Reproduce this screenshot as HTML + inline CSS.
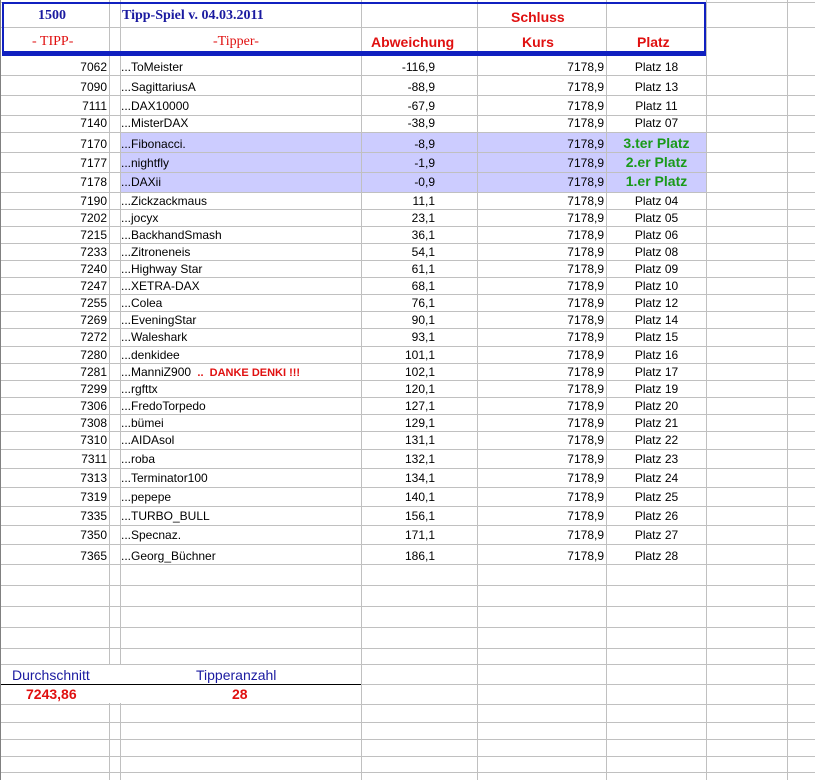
<!DOCTYPE html>
<html><head><meta charset="utf-8"><style>
body{margin:0;width:815px;height:780px;background:#fff;position:relative;overflow:hidden;font-family:"Liberation Sans",Arial,sans-serif;font-size:12px;color:#000}
.h{position:absolute;left:0;width:815px;height:1px;background:#c0c0c0}
.v{position:absolute;top:0;height:780px;width:1px;background:#c0c0c0}
.t{position:absolute;white-space:nowrap;line-height:14px}
.r{text-align:right}
.c{text-align:center}
.hl{position:absolute;left:121px;width:585px;background:#ccccff}
.g{color:#1a9a1a;font-weight:bold;font-size:14px}
.red{color:#e01010}
</style></head><body>
<div class="hl" style="top:133px;height:59px"></div>
<!-- horizontal lines -->
<div class="h" style="top:2px"></div><div class="h" style="top:27px"></div>
<div class="h" style="top:75px"></div><div class="h" style="top:95px"></div><div class="h" style="top:115px"></div><div class="h" style="top:132px"></div><div class="h" style="top:152px"></div><div class="h" style="top:172px"></div><div class="h" style="top:192px"></div>
<div class="h" style="top:209px"></div><div class="h" style="top:226px"></div><div class="h" style="top:243px"></div><div class="h" style="top:260px"></div><div class="h" style="top:277px"></div><div class="h" style="top:294px"></div><div class="h" style="top:311px"></div><div class="h" style="top:328px"></div><div class="h" style="top:346px"></div><div class="h" style="top:363px"></div><div class="h" style="top:380px"></div><div class="h" style="top:397px"></div><div class="h" style="top:414px"></div><div class="h" style="top:431px"></div><div class="h" style="top:449px"></div><div class="h" style="top:468px"></div><div class="h" style="top:487px"></div><div class="h" style="top:506px"></div><div class="h" style="top:525px"></div><div class="h" style="top:544px"></div><div class="h" style="top:564px"></div><div class="h" style="top:585px"></div><div class="h" style="top:606px"></div><div class="h" style="top:627px"></div><div class="h" style="top:648px"></div><div class="h" style="top:664px"></div><div class="h" style="top:684px"></div><div class="h" style="top:704px"></div><div class="h" style="top:722px"></div><div class="h" style="top:739px"></div><div class="h" style="top:756px"></div><div class="h" style="top:772px"></div>
<!-- vertical lines -->
<div class="v" style="left:0;background:#808080"></div>
<div class="v" style="left:109px"></div><div class="v" style="left:120px"></div><div class="v" style="left:361px"></div><div class="v" style="left:477px"></div><div class="v" style="left:606px"></div><div class="v" style="left:706px"></div><div class="v" style="left:787px"></div>
<!-- header box -->
<div style="position:absolute;left:2px;top:2px;width:700px;height:49px;border:2px solid #1020c0;border-bottom-width:3px;background:transparent"></div>
<div style="position:absolute;left:4px;top:4px;width:105px;height:48px;background:#fff"></div>
<div style="position:absolute;left:121px;top:4px;width:240px;height:48px;background:#fff"></div>
<div style="position:absolute;left:362px;top:4px;width:115px;height:48px;background:#fff"></div>
<div style="position:absolute;left:478px;top:4px;width:128px;height:48px;background:#fff"></div>
<div style="position:absolute;left:607px;top:4px;width:97px;height:48px;background:#fff"></div>
<div class="h" style="top:27px;left:4px;width:700px"></div>
<div class="t" style="left:38px;top:9px;font-family:'Liberation Serif',serif;font-weight:bold;font-size:14px;color:#1a1aa0">1500</div>
<div class="t" style="left:122px;top:9px;font-family:'Liberation Serif',serif;font-weight:bold;font-size:14px;color:#1a1aa0">Tipp-Spiel v. 04.03.2011</div>
<div class="t red" style="left:32px;top:35px;font-family:'Liberation Serif',serif;font-size:14px">- TIPP-</div>
<div class="t red" style="left:213px;top:35px;font-family:'Liberation Serif',serif;font-size:14px">-Tipper-</div>
<div class="t red" style="left:371px;top:35px;font-weight:bold;font-size:14px">Abweichung</div>
<div class="t red" style="left:511px;top:10px;font-weight:bold;font-size:14px">Schluss</div>
<div class="t red" style="left:522px;top:35px;font-weight:bold;font-size:14px">Kurs</div>
<div class="t red" style="left:637px;top:35px;font-weight:bold;font-size:14px">Platz</div>
<div style="position:absolute;left:2px;top:51px;width:704px;height:3px;background:#1020c0"></div>

<!-- rows -->
<div id="rows"></div>
<div class="t r" style="left:40px;width:67px;top:60px">7062</div><div class="t" style="left:121px;top:60px">...ToMeister</div><div class="t r" style="left:380px;width:55px;top:60px">-116,9</div><div class="t r" style="left:540px;width:64px;top:60px">7178,9</div><div class="t c" style="left:607px;width:99px;top:60px">Platz 18</div>
<div class="t r" style="left:40px;width:67px;top:80px">7090</div><div class="t" style="left:121px;top:80px">...SagittariusA</div><div class="t r" style="left:380px;width:55px;top:80px">-88,9</div><div class="t r" style="left:540px;width:64px;top:80px">7178,9</div><div class="t c" style="left:607px;width:99px;top:80px">Platz 13</div>
<div class="t r" style="left:40px;width:67px;top:99px">7111</div><div class="t" style="left:121px;top:99px">...DAX10000</div><div class="t r" style="left:380px;width:55px;top:99px">-67,9</div><div class="t r" style="left:540px;width:64px;top:99px">7178,9</div><div class="t c" style="left:607px;width:99px;top:99px">Platz 11</div>
<div class="t r" style="left:40px;width:67px;top:116px">7140</div><div class="t" style="left:121px;top:116px">...MisterDAX</div><div class="t r" style="left:380px;width:55px;top:116px">-38,9</div><div class="t r" style="left:540px;width:64px;top:116px">7178,9</div><div class="t c" style="left:607px;width:99px;top:116px">Platz 07</div>
<div class="t r" style="left:40px;width:67px;top:137px">7170</div><div class="t" style="left:121px;top:137px">...Fibonacci.</div><div class="t r" style="left:380px;width:55px;top:137px">-8,9</div><div class="t r" style="left:540px;width:64px;top:137px">7178,9</div><div class="t c g" style="left:607px;width:99px;top:136px">3.ter Platz</div>
<div class="t r" style="left:40px;width:67px;top:156px">7177</div><div class="t" style="left:121px;top:156px">...nightfly</div><div class="t r" style="left:380px;width:55px;top:156px">-1,9</div><div class="t r" style="left:540px;width:64px;top:156px">7178,9</div><div class="t c g" style="left:607px;width:99px;top:155px">2.er Platz</div>
<div class="t r" style="left:40px;width:67px;top:175px">7178</div><div class="t" style="left:121px;top:175px">...DAXii</div><div class="t r" style="left:380px;width:55px;top:175px">-0,9</div><div class="t r" style="left:540px;width:64px;top:175px">7178,9</div><div class="t c g" style="left:607px;width:99px;top:174px">1.er Platz</div>

<div class="t r" style="left:40px;width:67px;top:194px">7190</div><div class="t" style="left:121px;top:194px">...Zickzackmaus</div><div class="t r" style="left:380px;width:55px;top:194px">11,1</div><div class="t r" style="left:540px;width:64px;top:194px">7178,9</div><div class="t c" style="left:607px;width:99px;top:194px">Platz 04</div>
<div class="t r" style="left:40px;width:67px;top:211px">7202</div><div class="t" style="left:121px;top:211px">...jocyx</div><div class="t r" style="left:380px;width:55px;top:211px">23,1</div><div class="t r" style="left:540px;width:64px;top:211px">7178,9</div><div class="t c" style="left:607px;width:99px;top:211px">Platz 05</div>
<div class="t r" style="left:40px;width:67px;top:228px">7215</div><div class="t" style="left:121px;top:228px">...BackhandSmash</div><div class="t r" style="left:380px;width:55px;top:228px">36,1</div><div class="t r" style="left:540px;width:64px;top:228px">7178,9</div><div class="t c" style="left:607px;width:99px;top:228px">Platz 06</div>
<div class="t r" style="left:40px;width:67px;top:245px">7233</div><div class="t" style="left:121px;top:245px">...Zitroneneis</div><div class="t r" style="left:380px;width:55px;top:245px">54,1</div><div class="t r" style="left:540px;width:64px;top:245px">7178,9</div><div class="t c" style="left:607px;width:99px;top:245px">Platz 08</div>
<div class="t r" style="left:40px;width:67px;top:262px">7240</div><div class="t" style="left:121px;top:262px">...Highway Star</div><div class="t r" style="left:380px;width:55px;top:262px">61,1</div><div class="t r" style="left:540px;width:64px;top:262px">7178,9</div><div class="t c" style="left:607px;width:99px;top:262px">Platz 09</div>
<div class="t r" style="left:40px;width:67px;top:279px">7247</div><div class="t" style="left:121px;top:279px">...XETRA-DAX</div><div class="t r" style="left:380px;width:55px;top:279px">68,1</div><div class="t r" style="left:540px;width:64px;top:279px">7178,9</div><div class="t c" style="left:607px;width:99px;top:279px">Platz 10</div>
<div class="t r" style="left:40px;width:67px;top:296px">7255</div><div class="t" style="left:121px;top:296px">...Colea</div><div class="t r" style="left:380px;width:55px;top:296px">76,1</div><div class="t r" style="left:540px;width:64px;top:296px">7178,9</div><div class="t c" style="left:607px;width:99px;top:296px">Platz 12</div>
<div class="t r" style="left:40px;width:67px;top:313px">7269</div><div class="t" style="left:121px;top:313px">...EveningStar</div><div class="t r" style="left:380px;width:55px;top:313px">90,1</div><div class="t r" style="left:540px;width:64px;top:313px">7178,9</div><div class="t c" style="left:607px;width:99px;top:313px">Platz 14</div>
<div class="t r" style="left:40px;width:67px;top:330px">7272</div><div class="t" style="left:121px;top:330px">...Waleshark</div><div class="t r" style="left:380px;width:55px;top:330px">93,1</div><div class="t r" style="left:540px;width:64px;top:330px">7178,9</div><div class="t c" style="left:607px;width:99px;top:330px">Platz 15</div>
<div class="t r" style="left:40px;width:67px;top:348px">7280</div><div class="t" style="left:121px;top:348px">...denkidee</div><div class="t r" style="left:380px;width:55px;top:348px">101,1</div><div class="t r" style="left:540px;width:64px;top:348px">7178,9</div><div class="t c" style="left:607px;width:99px;top:348px">Platz 16</div>
<div class="t r" style="left:40px;width:67px;top:365px">7281</div><div class="t" style="left:121px;top:365px">...ManniZ900 <span class="red" style="font-weight:bold;font-size:11px">&nbsp;..&nbsp; DANKE DENKI !!!</span></div><div class="t r" style="left:380px;width:55px;top:365px">102,1</div><div class="t r" style="left:540px;width:64px;top:365px">7178,9</div><div class="t c" style="left:607px;width:99px;top:365px">Platz 17</div>
<div class="t r" style="left:40px;width:67px;top:382px">7299</div><div class="t" style="left:121px;top:382px">...rgfttx</div><div class="t r" style="left:380px;width:55px;top:382px">120,1</div><div class="t r" style="left:540px;width:64px;top:382px">7178,9</div><div class="t c" style="left:607px;width:99px;top:382px">Platz 19</div>
<div class="t r" style="left:40px;width:67px;top:399px">7306</div><div class="t" style="left:121px;top:399px">...FredoTorpedo</div><div class="t r" style="left:380px;width:55px;top:399px">127,1</div><div class="t r" style="left:540px;width:64px;top:399px">7178,9</div><div class="t c" style="left:607px;width:99px;top:399px">Platz 20</div>
<div class="t r" style="left:40px;width:67px;top:416px">7308</div><div class="t" style="left:121px;top:416px">...bümei</div><div class="t r" style="left:380px;width:55px;top:416px">129,1</div><div class="t r" style="left:540px;width:64px;top:416px">7178,9</div><div class="t c" style="left:607px;width:99px;top:416px">Platz 21</div>
<div class="t r" style="left:40px;width:67px;top:433px">7310</div><div class="t" style="left:121px;top:433px">...AIDAsol</div><div class="t r" style="left:380px;width:55px;top:433px">131,1</div><div class="t r" style="left:540px;width:64px;top:433px">7178,9</div><div class="t c" style="left:607px;width:99px;top:433px">Platz 22</div>
<div class="t r" style="left:40px;width:67px;top:452px">7311</div><div class="t" style="left:121px;top:452px">...roba</div><div class="t r" style="left:380px;width:55px;top:452px">132,1</div><div class="t r" style="left:540px;width:64px;top:452px">7178,9</div><div class="t c" style="left:607px;width:99px;top:452px">Platz 23</div>
<div class="t r" style="left:40px;width:67px;top:471px">7313</div><div class="t" style="left:121px;top:471px">...Terminator100</div><div class="t r" style="left:380px;width:55px;top:471px">134,1</div><div class="t r" style="left:540px;width:64px;top:471px">7178,9</div><div class="t c" style="left:607px;width:99px;top:471px">Platz 24</div>
<div class="t r" style="left:40px;width:67px;top:490px">7319</div><div class="t" style="left:121px;top:490px">...pepepe</div><div class="t r" style="left:380px;width:55px;top:490px">140,1</div><div class="t r" style="left:540px;width:64px;top:490px">7178,9</div><div class="t c" style="left:607px;width:99px;top:490px">Platz 25</div>
<div class="t r" style="left:40px;width:67px;top:509px">7335</div><div class="t" style="left:121px;top:509px">...TURBO_BULL</div><div class="t r" style="left:380px;width:55px;top:509px">156,1</div><div class="t r" style="left:540px;width:64px;top:509px">7178,9</div><div class="t c" style="left:607px;width:99px;top:509px">Platz 26</div>
<div class="t r" style="left:40px;width:67px;top:528px">7350</div><div class="t" style="left:121px;top:528px">...Specnaz.</div><div class="t r" style="left:380px;width:55px;top:528px">171,1</div><div class="t r" style="left:540px;width:64px;top:528px">7178,9</div><div class="t c" style="left:607px;width:99px;top:528px">Platz 27</div>
<div class="t r" style="left:40px;width:67px;top:549px">7365</div><div class="t" style="left:121px;top:549px">...Georg_Büchner</div><div class="t r" style="left:380px;width:55px;top:549px">186,1</div><div class="t r" style="left:540px;width:64px;top:549px">7178,9</div><div class="t c" style="left:607px;width:99px;top:549px">Platz 28</div>

<!-- footer -->
<div style="position:absolute;left:1px;top:665px;width:360px;height:38px;background:#fff"></div>
<div style="position:absolute;left:1px;top:684px;width:360px;height:1px;background:#000"></div>
<div class="t" style="left:12px;top:668px;font-size:14px;color:#1a1aa0">Durchschnitt</div>
<div class="t" style="left:196px;top:668px;font-size:14px;color:#1a1aa0">Tipperanzahl</div>
<div class="t red" style="left:26px;top:687px;font-size:14px;font-weight:bold">7243,86</div>
<div class="t red" style="left:232px;top:687px;font-size:14px;font-weight:bold">28</div>
</body></html>
